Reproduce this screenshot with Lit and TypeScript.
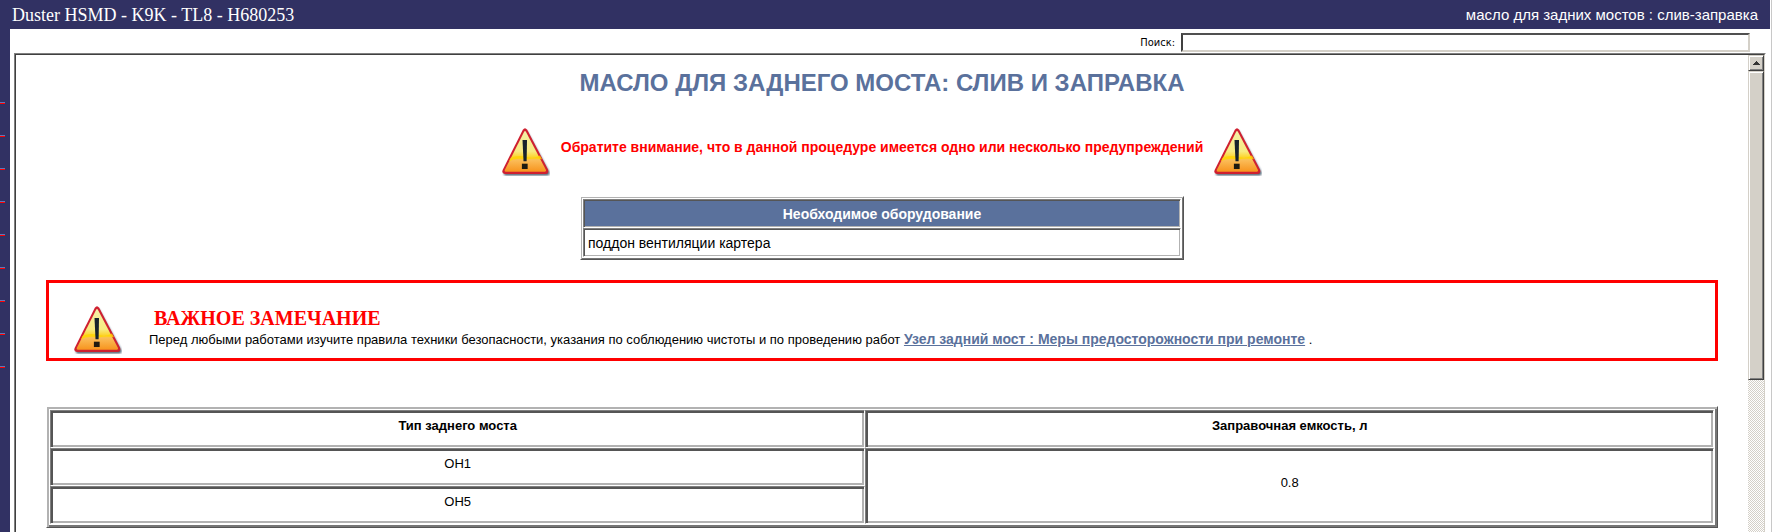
import { LitElement, html, css } from "lit";
import { customElement } from "lit/decorators.js";

@customElement("warning-icon")
class WarningIcon extends LitElement {
  static styles = css`
    :host { display: block; flex: none; width: 48px; height: 48px; }
    .icon { display: block; width: 48px; height: 48px; }
  `;
  render() {
    return html`<svg class="icon" viewBox="0.6 0.6 46.8 46.8" aria-hidden="true">
      <defs>
        <linearGradient id="fill" x1="0" y1="0" x2="0" y2="1">
          <stop offset="0" stop-color="#f3f0a8" />
          <stop offset="0.5" stop-color="#f8ea80" />
          <stop offset="0.64" stop-color="#fcd530" />
          <stop offset="0.72" stop-color="#fbbc58" />
          <stop offset="1" stop-color="#f7941e" />
        </linearGradient>
        <filter id="soft"><feGaussianBlur stdDeviation="0.8" /></filter>
      </defs>
      <path d="M24.6 3 L47 44 Q47.4 46.8 44.6 46.8 L4 46.8 Q1.6 46.6 3 44 Z" fill="#2c4258" opacity="0.85" filter="url(#soft)" />
      <path d="M20.9 2.4 Q23 -0.6 25.2 2.4 L45.6 41.4 Q46.4 45.2 43 45.4 L3.4 45.4 Q0 45.2 1.2 41.6 Z" fill="#cf2030" />
      <path d="M22.2 4.2 Q23 2.9 23.9 4.2 L43.5 41.5 Q43.9 43.1 42.4 43.2 L4.4 43.2 Q2.8 43.1 3.3 41.6 Z" fill="url(#fill)" />
      <path d="M9 29.6 Q16 27 23 28.5 Q32 31 37.6 27.5 L39.6 31 Q31 29.5 24 31.5 Q14 29 7.4 33 Z" fill="#ffd500" opacity="0.8" />
      <path d="M20.6 12.4 L25 12.2 L24.6 33 L21.6 33 Z" fill="#16222c" />
      <rect x="20" y="35.4" width="5.6" height="5.2" fill="#1f1a10" />
    </svg>`;
  }
}

@customElement("app-root")
class AppRoot extends LitElement {
  static styles = css`
    :host {
      display: grid;
      grid-template: auto minmax(0, 1fr) / 10px minmax(0, 1fr);
      height: 100vh;
      box-sizing: border-box;
      overflow: hidden;
      padding-right: 1px;
      border-right: 1px solid #c8c8c8;
      background: #fff;
      color: #000;
      font-family: "Liberation Sans", Arial, sans-serif;
    }
    .top {
      grid-column: 1 / -1;
      display: flex;
      justify-content: space-between;
      align-items: center;
      height: 29px;
      padding: 0 12px;
      background: #313163;
      color: #fff;
    }
    .model { font: 18px/28px "Liberation Serif", "Times New Roman", serif; }
    .topic { font-size: 15px; line-height: 30px; }
    .rail {
      display: flex;
      flex-direction: column;
      gap: 31px;
      padding-top: 73px;
      background: #313163;
    }
    .tick { width: 5px; height: 1px; border-top: 1px solid #5a79bd; background: #f00; }
    .main { display: flex; flex-direction: column; min-width: 0; padding: 4px 4px 0; }
    .search {
      display: flex;
      justify-content: flex-end;
      align-items: center;
      gap: 6px;
      padding: 0 16px 1px 0;
      font: 11px "DejaVu Sans Condensed", Tahoma, sans-serif;
    }
    .field {
      box-sizing: border-box;
      width: 569px;
      height: 19px;
      padding: 0 2px;
      border: 2px solid;
      border-color: #505050 #d4d0c8 #d4d0c8 #404040;
      border-radius: 0;
      background: #fff;
      outline: none;
    }
    .frame {
      flex: 1;
      display: flex;
      min-height: 0;
      border: 1px solid;
      border-color: #808080 #fff #fff #808080;
      border-bottom: 0;
    }
    .inner {
      flex: 1;
      display: flex;
      min-width: 0;
      border: 1px solid;
      border-color: #404040 #d4d0c8 #d4d0c8 #404040;
      border-bottom: 0;
    }
    .doc { flex: 1; min-width: 0; overflow: hidden; padding: 0 30px; }
    .bar {
      flex: none;
      display: flex;
      flex-direction: column;
      width: 16px;
      background: repeating-conic-gradient(#d4d0c8 0 25%, #fff 0 50%) 0 0 / 2px 2px;
    }
    .up, .thumb {
      box-sizing: border-box;
      border: 1px solid;
      border-color: #d4d0c8 #404040 #404040 #d4d0c8;
      background: #d4d0c8;
      box-shadow: inset 1px 1px #fff, inset -1px -1px #808080;
    }
    .up { display: grid; place-items: center; width: 16px; height: 16px; padding: 0; border-radius: 0; }
    .arrow { display: block; width: 7px; height: 4px; }
    .thumb { height: 309px; }
    .title {
      margin: 13px 0 0;
      text-align: center;
      font-size: 24px;
      line-height: 30px;
      font-weight: bold;
      color: #5a719c;
    }
    .alert { display: flex; justify-content: center; gap: 11px; margin-top: 30px; }
    .alert-text { font-size: 14px; line-height: 39px; font-weight: bold; color: #f00; }
    .grid {
      border: 1px solid;
      border-color: #fff #555 #555 #fff;
      border-collapse: separate;
      border-spacing: 0;
    }
    .cell { border: 1px solid; border-color: #808080 #fff #fff #808080; line-height: 16px; }
    .tools {
      width: 604px;
      margin: 20px auto 0;
      padding: 2px;
      box-shadow: inset 1px 1px #b2b2b2, inset -1px -1px #767676;
      font-size: 14px;
    }
    .tools .cell {
      padding: 6px 4px 5px;
      box-shadow: inset 1px 1px #555, inset -1px -1px #b2b2b2;
      text-align: left;
    }
    .tools .head { background: #5a719c; color: #fff; text-align: center; }
    .note {
      display: flex;
      align-items: flex-end;
      gap: 27px;
      margin-top: 20px;
      padding: 23px 25px 4px;
      border: 3px solid #f00;
    }
    .note-body { padding-bottom: 4px; }
    .note-title {
      margin: 0 0 0 5px;
      font: bold 20px/22px "Liberation Serif", "Times New Roman", serif;
      color: #f00;
    }
    .note-text { margin: 0; font-size: 13px; line-height: 20px; }
    .link { font-size: 14px; font-weight: bold; color: #5a719c; }
    .specs {
      width: 100%;
      margin-top: 45px;
      padding: 3px;
      box-shadow: inset 2px 2px #b2b2b2, inset -2px -2px #767676;
      font-size: 13px;
      text-align: center;
    }
    .specs .cell {
      padding: 7px 8px 13px;
      box-shadow: inset 2px 2px #555, inset -2px -2px #b2b2b2;
    }
    .type { width: 49%; }
  `;

  render() {
    return html`
      <header class="top">
        <span class="model">Duster HSMD - K9K - TL8 - H680253</span>
        <span class="topic">масло для задних мостов : слив-заправка</span>
      </header>
      <div class="rail">${Array.from({ length: 9 }, () => html`<span class="tick"></span>`)}</div>
      <main class="main">
        <div class="search">
          <label for="q">Поиск:</label>
          <input class="field" id="q" type="text" />
        </div>
        <div class="frame"><div class="inner">
          <article class="doc">
            <h1 class="title">МАСЛО ДЛЯ ЗАДНЕГО МОСТА: СЛИВ И ЗАПРАВКА</h1>
            <div class="alert">
              <warning-icon></warning-icon>
              <span class="alert-text">Обратите внимание, что в данной процедуре имеется одно или несколько предупреждений</span>
              <warning-icon></warning-icon>
            </div>
            <table class="grid tools">
              <thead><tr><th class="cell head">Необходимое оборудование</th></tr></thead>
              <tbody><tr><td class="cell">поддон вентиляции картера</td></tr></tbody>
            </table>
            <section class="note">
              <warning-icon></warning-icon>
              <div class="note-body">
                <h2 class="note-title">ВАЖНОЕ ЗАМЕЧАНИЕ</h2>
                <p class="note-text">Перед любыми работами изучите правила техники безопасности, указания по соблюдению чистоты и по проведению работ
                  <a class="link" href="#">Узел задний мост : Меры предосторожности при ремонте</a> .</p>
              </div>
            </section>
            <table class="grid specs">
              <colgroup><col class="type" /><col /></colgroup>
              <thead>
                <tr><th class="cell">Тип заднего моста</th><th class="cell">Заправочная емкость, л</th></tr>
              </thead>
              <tbody>
                <tr><td class="cell">ОН1</td><td class="cell" rowspan="2">0.8</td></tr>
                <tr><td class="cell">ОН5</td></tr>
              </tbody>
            </table>
          </article>
          <div class="bar">
            <button class="up" aria-label="Вверх"><svg class="arrow" viewBox="0 0 7 4" shape-rendering="crispEdges"><path d="M3 0h1v1h1v1h1v1h1v1H0V3h1V2h1V1h1z" fill="#333" /></svg></button>
            <div class="thumb"></div>
          </div>
        </div></div>
      </main>`;
  }
}
